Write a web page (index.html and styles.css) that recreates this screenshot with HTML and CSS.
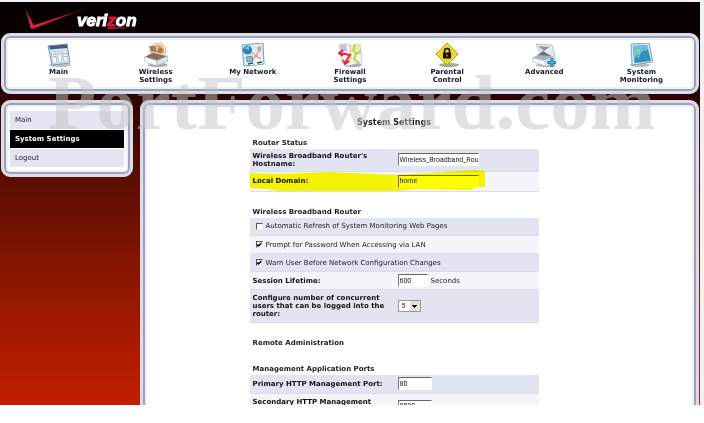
FILE: index.html
```html
<!DOCTYPE html>
<html lang="en">
<head>
<meta charset="utf-8">
<title>System Settings</title>
<link rel="stylesheet" href="styles.css">
</head>
<body>
<div class="app">
  <header class="brand">
    <svg class="check" viewBox="0 0 110 24" aria-hidden="true">
      <defs>
        <linearGradient id="ck1" x1="0" y1="0" x2="0" y2="1"><stop offset="0" stop-color="#a8303c" stop-opacity=".6"/><stop offset=".6" stop-color="#e0203c"/></linearGradient>
        <linearGradient id="ck2" x1="0" y1="0" x2="1" y2="0"><stop offset="0" stop-color="#e8204a"/><stop offset=".5" stop-color="#c01434"/><stop offset="1" stop-color="#701018" stop-opacity=".6"/></linearGradient>
        <linearGradient id="ck3" x1="0" y1="0" x2="1" y2="0"><stop offset="0" stop-color="#d81838"/><stop offset="1" stop-color="#600c18" stop-opacity=".5"/></linearGradient>
      </defs>
      <path d="M0 1 6 22 9.500 20Z" fill="url(#ck1)"/>
      <path d="M6 22 8 18.500 62 1 9 21.500Z" fill="url(#ck2)"/>
      <path d="M82 22 84 20 107 20 98 22Z" fill="url(#ck3)"/>
    </svg>
    <span class="wordmark">veri<span class="z">z</span>on</span>
  </header>

  <nav class="panel topnav">
    <a href="#"><svg viewBox="0 0 24 24"><ellipse cx="13" cy="22" rx="11" ry="2" fill="#b9c0c6"/><path d="M1 3 20 1 23 20 5 22Z" fill="#dbe9f2" stroke="#7896ac"/><path d="M2 3 20 1.500 20.500 5 3 6.500Z" fill="#3e5f7c"/><path d="M4 9 8 8.500 10 20 6 20.500ZM10 8.500 14 8 15 19 12 19.500ZM15.500 8 19.500 7.500 21 18 17 18.500Z" fill="#fff" stroke="#9db8cb" stroke-width=".7"/><path d="M5 11.500 8 11M5.500 14 9 13.500M11 11 14 10.500M16 11 20 10.500M17 14 20 13.500" stroke="#7e9bb0" stroke-width=".8"/></svg><span>Main</span></a>
    <a href="#"><svg viewBox="0 0 24 24"><ellipse cx="14" cy="22" rx="10" ry="2" fill="#a9adb0"/><circle cx="14" cy="8" r="8" fill="#f8e6cf" stroke="#e3b781"/><circle cx="14" cy="8" r="5.500" fill="#e5bd98" stroke="#c98f5a"/><path d="M5 3 11 3 13 9 8 11ZM15 4 19 6 17 11 13 10Z" fill="#a67858"/><path d="M0 14 9 9 24 13 13 18Z" fill="#8b6d59" stroke="#e7edf0"/><path d="M0 14 13 17.500 13 23 1 19Z" fill="#f5f8fa" stroke="#aab5bd" stroke-width=".6"/><path d="M13 17.500 24 13 24 18 13 23Z" fill="#dde4e9" stroke="#8fa0ad" stroke-width=".6"/></svg><span>Wireless<br>Settings</span></a>
    <a href="#"><svg viewBox="0 0 24 24"><path d="M1 2 22 0 23 21 3 23Z" fill="#e1edf6" stroke="#6f9ec4"/><path d="M4 15 10 14 12 22 5 22ZM13 17 22 15 22 20 14 22Z" fill="#f8fafc"/><path d="M8 7 15 13 18 7M15 13 10 18M15 13 20 16" fill="none" stroke="#ed7a37"/><circle cx="6.500" cy="7" r="4.500" fill="#2786ae"/><path d="M3 5 8 3 8 7Z" fill="#79c9dc"/><path d="M5 14 11 13 12 18 6 19Z" fill="#8fbfd6" stroke="#2e6689" stroke-width=".6"/><path d="M16 4 20 3 20 8 17 9Z" fill="#c8a988"/><path d="M7 21 12 20M16 20 21 19" stroke="#234c70" stroke-width="1.500"/></svg><span>My Network</span></a>
    <a href="#"><svg viewBox="0 0 24 24"><ellipse cx="15" cy="22" rx="9" ry="2" fill="#a9adb0"/><path d="M1 2 8 1 15 3 22 1 24 19 17 21 10 23 4 20Z" fill="#f4f2ea" stroke="#b7bdb8" stroke-width=".7"/><path d="M2 2 8 1 9 8 3 9Z" fill="#c5c0e2"/><path d="M15 3 22 1 22 7 16 9Z" fill="#eee8a5"/><path d="M17 1 15 7 18 11 16 16 21 20M18 11 23 8" fill="none" stroke="#a4cf2c" stroke-width="1.500"/><path d="M12 3 13 12 11 20" fill="none" stroke="#efb83c"/><path d="M2 10 12 12 7 20M5 7 1 10 5 13M5 17 7 21 11 18" fill="none" stroke="#df2438" stroke-width="1.800"/></svg><span>Firewall<br>Settings</span></a>
    <a href="#"><svg viewBox="0 0 24 24"><ellipse cx="14" cy="22" rx="10" ry="2" fill="#aaa694"/><path d="M12 0 23 11 12 22 1 11Z" fill="#ecd21b" stroke="#bca30f"/><path d="M12 2 21 11 12 20 3 11Z" fill="none" stroke="#fff06a" stroke-width=".7"/><path d="M9.500 10V8a2.500 2.500 0 0 1 5 0v2" fill="none" stroke="#151204" stroke-width="1.500"/><path d="M8 9.500h8v6H8Z" fill="#151204"/><path d="M12 11.500v2" stroke="#f0d51b"/></svg><span>Parental<br>Control</span></a>
    <a href="#"><svg viewBox="0 0 24 24"><ellipse cx="14" cy="22" rx="10" ry="2" fill="#b4bcc2"/><path d="M4 1 20 2 23 13 9 11Z" fill="#e6ecf0" stroke="#a7b3bc" stroke-width=".8"/><path d="M6 3 18 4 12 8Z" fill="#8f979f"/><path d="M0 15 8 10 24 13 13 18Z" fill="#a5b0ba" stroke="#e3eaef"/><path d="M6 12 11 8 19 13Z" fill="#69737e"/><path d="M0 15 13 18 13 23 1 19Z" fill="#f5f9fb" stroke="#a7b3bc" stroke-width=".6"/><path d="M13 18 24 13 23 19 13 23Z" fill="#d5dfe6"/><path d="M20 15v9M15.500 19.500h9" stroke="#1680ae" stroke-width="3"/><path d="M20 16v7M16.500 19.500h7" stroke="#5cbbdc"/></svg><span>Advanced</span></a>
    <a href="#"><svg viewBox="0 0 24 24"><ellipse cx="11" cy="22" rx="10" ry="2" fill="#b4bcc2"/><path d="M2 1 20 0 24 19 3 22Z" fill="#d4e5ed" stroke="#6d91a6" stroke-width=".8"/><path d="M4 3 18 2 22 18 5.500 20Z" fill="#2a8fc0"/><path d="M4 3 18 2 19 7Q10 8 5 17Z" fill="#6dbfdf"/><path d="M7 8 11 7M8 11 11 10 9 15" fill="none" stroke="#a9d95d" stroke-width="1.300"/><path d="M14 5 17 16M6 13 20 11" stroke="#3d9dc9" stroke-width=".6"/></svg><span>System<br>Monitoring</span></a>
  </nav>

  <div class="columns">
    <aside class="panel side">
      <a href="#">Main</a>
      <a href="#" class="current" aria-current="page">System Settings</a>
      <a href="#">Logout</a>
    </aside>

    <main class="panel content">
      <form class="settings">
        <h1>System Settings</h1>

        <section>
          <h2>Router Status</h2>
          <table>
            <colgroup><col class="name"><col></colgroup>
            <tr class="tall"><th><label for="host">Wireless Broadband Router's Hostname:</label></th><td><input class="field wide" id="host" type="text" value="Wireless_Broadband_Rou"></td></tr>
            <tr class="marked"><th><label for="domain">Local Domain:</label>
              <svg class="marker" viewBox="0 0 235 22" aria-hidden="true"><path d="M0 3 26 4 80 2 146 5 225 0 235 1V17H226L220 20 166 19 146 21H30L16 19 0 18Z" fill="#ff0"/></svg></th>
              <td><input class="field wide" id="domain" type="text" value="home"></td></tr>
          </table>
        </section>

        <section>
          <h2>Wireless Broadband Router</h2>
          <table>
            <colgroup><col class="name"><col></colgroup>
            <tr><td colspan="2"><label class="tick"><input type="checkbox">Automatic Refresh of System Monitoring Web Pages</label></td></tr>
            <tr><td colspan="2"><label class="tick"><input type="checkbox" checked>Prompt for Password When Accessing via LAN</label></td></tr>
            <tr><td colspan="2"><label class="tick"><input type="checkbox" checked>Warn User Before Network Configuration Changes</label></td></tr>
            <tr><th><label for="life">Session Lifetime:</label></th><td><input class="field short" id="life" type="text" value="600"><span class="unit">Seconds</span></td></tr>
            <tr class="triple"><th><label for="users">Configure number of concurrent users that can be logged into the router:</label></th><td><select id="users"><option>5</option></select></td></tr>
          </table>
        </section>

        <section>
          <h2>Remote Administration</h2>
        </section>

        <section>
          <h2>Management Application Ports</h2>
          <table>
            <colgroup><col class="name"><col></colgroup>
            <tr><th><label for="p1">Primary HTTP Management Port:</label></th><td><input class="field port" id="p1" type="text" value="80"></td></tr>
            <tr class="taller"><th><label for="p2">Secondary HTTP Management<br>Port:</label></th><td><input class="field port" id="p2" type="text" value="8080"></td></tr>
          </table>
        </section>
      </form>
    </main>
  </div>
  <div class="watermark">PortForward.com</div>
</div>
</body>
</html>
```

FILE: styles.css
```css
* { box-sizing: border-box; }

html { background: #fff; }

body {
  margin: 0;
  padding: 2px 4px 18px 0;
  height: 100vh;
  overflow: hidden;
  background: linear-gradient(#f1f1f4, #f1f1f4) top / 100% calc(100% - 18px) no-repeat;
  font: 7px/8px "DejaVu Sans", Verdana, sans-serif;
  color: #1c1c28;
}

a { color: inherit; text-decoration: none; }

.app {
  position: relative;
  height: 100%;
  overflow: hidden;
  padding: 0 1px;
  background: linear-gradient(#080000 0, #0c0000 14%, #2e0504 24%, #5c0e02 45%, #951800 74%, #c41e00 100%);
}

.brand {
  display: flex;
  align-items: flex-start;
  height: 31px;
  padding: 5px 0 0 24px;
}

.check { width: 110px; height: 24px; }

.wordmark {
  margin-left: -58px;
  padding-top: 5px;
  font: italic bold 17px/18px "Liberation Sans", Arial, sans-serif;
  color: #fff;
  -webkit-text-stroke: 1px #fff;
}

.z { color: #d81838; -webkit-text-stroke: 1px #d81838; }

.panel {
  border: 3px solid #dcddea;
  border-radius: 9px;
  background: #fff;
  box-shadow: inset 0 0 0 2px #9ca1b3, inset 0 0 0 4px #ebf0f9;
}

.topnav {
  display: grid;
  grid-template-columns: repeat(7, 1fr);
  height: 61px;
  padding: 7px 6px;
}

.topnav a {
  display: flex;
  flex-direction: column;
  align-items: center;
  gap: 1px;
  font-weight: bold;
  text-align: center;
  color: #15152e;
}

.topnav svg { width: 24px; height: 24px; }

.columns {
  display: flex;
  align-items: flex-start;
  gap: 7px;
  margin-top: 6px;
}

.side {
  display: grid;
  gap: 1px;
  flex: 0 0 132px;
  padding: 8px 6px 7px;
}

.side a {
  padding: 5px;
  background: #e3e5f2;
}

.side .current {
  background: #000;
  color: #fff;
  font-weight: bold;
}

.content {
  flex: 1;
  min-height: 100vh;
  padding: 15px 51px 20px 0;
}

.settings { width: 289px; margin: 0 auto; }

h1 {
  margin: 0 0 11px;
  font-size: 8px;
  line-height: 10px;
  text-align: center;
}

h2 {
  margin: 0;
  padding: 0 3px 2px;
  font-size: 7px;
  line-height: 8px;
}

section { margin-bottom: 16px; }

table {
  width: 100%;
  table-layout: fixed;
  border-collapse: collapse;
}

.name { width: 148px; }

tr { height: 18px; background: #f4f4f9; border-bottom: 1px solid #dcdde8; }
tr:nth-child(odd) { background: #e2e4f1; }
.tall { height: 22px; }
.taller { height: 26px; }
.marked { height: 20px; }
.triple { height: 33px; }

th, td { padding: 0 0 0 3px; text-align: left; vertical-align: middle; }
th { position: relative; color: #111; }
td { padding-left: 0; }

.marker {
  position: absolute;
  z-index: 1;
  left: 0;
  top: -2px;
  width: 235px;
  height: 22px;
  mix-blend-mode: multiply;
  pointer-events: none;
}

.field {
  display: inline-block;
  height: 13px;
  padding: 0 0 0 1px;
  border: 1px solid #fff;
  border-top-color: #666;
  border-left-color: #777;
  border-radius: 0;
  background: #fff;
  color: #222;
  font: 7px/11px Roboto, "Liberation Sans", Arial, sans-serif;
  vertical-align: middle;
}

.wide { width: 81px; }
.short { width: 30px; }
.port { width: 34px; }
.unit { margin-left: 3px; vertical-align: middle; }

.tick { display: flex; align-items: center; gap: 3px; padding-left: 6px; }

.tick input {
  appearance: none;
  width: 7px;
  height: 7px;
  margin: 0;
  border: 1px solid #eee;
  border-top-color: #555;
  border-left-color: #555;
  background: #fff;
}

.tick input:checked::before {
  content: "";
  display: block;
  height: 5px;
  background: #111;
  clip-path: polygon(0 30%, 40% 55%, 100% 0, 100% 45%, 40% 100%, 0 75%);
}

select {
  appearance: none;
  display: block;
  width: 23px;
  height: 12px;
  padding: 0 3px;
  border: 1px solid #999;
  border-radius: 0;
  background:
    linear-gradient(#111, #111) right 3px top 4px / 5px 1px no-repeat,
    linear-gradient(#111, #111) right 4px top 5px / 3px 1px no-repeat,
    linear-gradient(#111, #111) right 5px top 6px / 1px 1px no-repeat,
    linear-gradient(#e4e2de, #e4e2de) right / 10px 100% no-repeat,
    #fff;
  font: 7px/10px Roboto, "Liberation Sans", Arial, sans-serif;
  color: #222;
}

.watermark {
  position: absolute;
  z-index: 2;
  top: 57px;
  left: 48px;
  font: bold 79px/88px "Liberation Serif", "Times New Roman", serif;
  color: rgba(196, 196, 196, .5);
  white-space: nowrap;
  pointer-events: none;
}
```
